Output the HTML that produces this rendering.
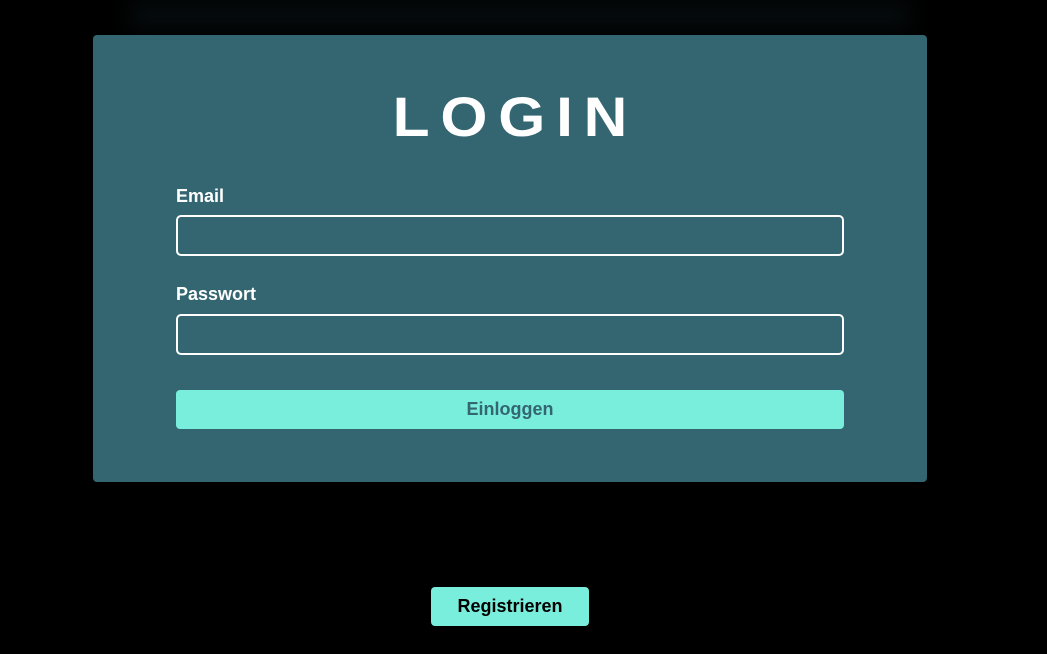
<!DOCTYPE html>
<html><head><meta charset="utf-8"><style>
html,body{margin:0;padding:0;background:#000;width:1047px;height:654px;overflow:hidden;font-family:"Liberation Sans",sans-serif;}
.glow{position:absolute;left:130px;top:0;width:780px;height:30px;background:#050a0c;filter:blur(10px);}
.card{position:absolute;left:93px;top:35px;width:834px;height:447px;background:#336670;border-radius:4px;}
h1{position:absolute;left:0;width:834px;top:54px;margin:0;text-align:center;color:#fff;font-size:56px;font-weight:bold;letter-spacing:10px;line-height:56px;padding-left:10px;box-sizing:border-box;transform:scaleX(1.08);transform-origin:417px 0;}
.lbl{position:absolute;left:83px;color:#fff;font-weight:bold;font-size:18px;}
.inp{position:absolute;left:83px;width:664px;height:37px;border:2px solid #fff;border-radius:5px;}
.btn{position:absolute;left:83px;top:355px;width:668px;height:39px;background:#7aeedc;border-radius:4px;color:#336670;text-align:center;line-height:39px;font-size:18px;font-weight:bold;}
.reg{position:absolute;left:431px;top:587px;width:158px;height:39px;background:#7aeedc;border-radius:4px;color:#000;text-align:center;line-height:39px;font-size:18px;font-weight:bold;}
</style></head><body>
<div class="glow"></div>
<div class="card">
<h1>LOGIN</h1>
<div class="lbl" style="top:151px">Email</div>
<div class="inp" style="top:180px"></div>
<div class="lbl" style="top:249px">Passwort</div>
<div class="inp" style="top:279px"></div>
<div class="btn">Einloggen</div>
</div>
<div class="reg">Registrieren</div>
</body></html>
